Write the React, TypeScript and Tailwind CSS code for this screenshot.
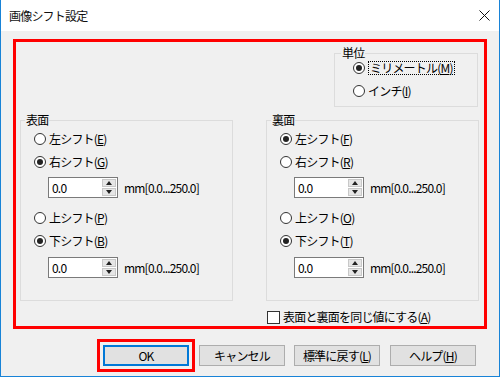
const Radio = ({ checked }: { checked?: boolean }) => (
  <span className="w-[12px] h-[12px] rounded-full border border-[#333] bg-white flex items-center justify-center shrink-0">
    {checked && <span className="w-[6px] h-[6px] rounded-full bg-[#222]" />}
  </span>
)

function RadioRow({ label, keyChar, checked }: { label: string; keyChar: string; checked?: boolean }) {
  return (
    <div className="h-[23px] flex items-center gap-[3px] pl-[13px]">
      <Radio checked={checked} />
      <span>
        {label}(<span className="underline">{keyChar}</span>)
      </span>
    </div>
  )
}

function Spin({ className = '' }: { className?: string }) {
  return (
    <div className={`flex items-center gap-[6px] pl-[27px] ${className}`}>
      <div className="w-[70px] h-[21px] border border-[#7a7a7a] bg-white flex">
        <span className="flex-1 pl-[3px] leading-[19px]">0.0</span>
        <div className="w-[16px] flex flex-col gap-[1px] p-[1px] bg-white">
          <span className="flex-1 bg-[#e6e6e6] border border-[#c8c8c8] flex items-center justify-center">
            <svg width="6" height="4" viewBox="0 0 6 4"><path d="M0 4 L3 0 L6 4 Z" fill="#222" /></svg>
          </span>
          <span className="flex-1 bg-[#e6e6e6] border border-[#c8c8c8] flex items-center justify-center">
            <svg width="6" height="4" viewBox="0 0 6 4"><path d="M0 0 L6 0 L3 4 Z" fill="#222" /></svg>
          </span>
        </div>
      </div>
      <span>mm[0.0...250.0]</span>
    </div>
  )
}

function SideGroup({ title, rows }: { title: string; rows: [string, string, boolean][] }) {
  return (
    <fieldset className="w-[213px] h-[188px] border border-[#dcdcdc]">
      <legend className="ml-[4px] px-[1px] leading-[14px]">{title}</legend>
      <RadioRow label={rows[0][0]} keyChar={rows[0][1]} checked={rows[0][2]} />
      <RadioRow label={rows[1][0]} keyChar={rows[1][1]} checked={rows[1][2]} />
      <Spin className="mt-[4px]" />
      <div className="mt-[8px]">
        <RadioRow label={rows[2][0]} keyChar={rows[2][1]} checked={rows[2][2]} />
        <RadioRow label={rows[3][0]} keyChar={rows[3][1]} checked={rows[3][2]} />
      </div>
      <Spin className="mt-[5px]" />
    </fieldset>
  )
}

function Button({ children }: { children: React.ReactNode }) {
  return (
    <button className="w-[86px] h-[21px] bg-[#e1e1e1] border border-[#adadad] text-[12px] leading-[19px] text-black">
      {children}
    </button>
  )
}

export default function App() {
  return (
    <div className="w-[500px] h-[377px] bg-[#f0f0f0] border-x border-b border-[#1883d7] flex flex-col text-[12px] tracking-[-0.8px] text-black font-['Noto_Sans_CJK_JP',sans-serif]">
      {/* Title bar */}
      <div className="h-[31px] bg-white flex items-center justify-between pl-[8px] pr-[9px] shrink-0">
        <span className="text-[12px] text-[#111]">画像シフト設定</span>
        <svg width="11" height="11" viewBox="0 0 11 11">
          <path d="M0.5 0.5 L10.5 10.5 M10.5 0.5 L0.5 10.5" stroke="#111" strokeWidth="1" />
        </svg>
      </div>

      {/* Red highlight box */}
      <div className="mt-[8px] ml-[12px] w-[474px] h-[290px] border-[3px] border-[#ff0000] flex flex-col">
        <fieldset className="self-end mr-[6px] mt-[4px] w-[144px] h-[61px] border border-[#dcdcdc]">
          <legend className="ml-[6px] px-[1px] leading-[14px]">単位</legend>
          <div className="flex flex-col gap-[7px] pl-[18px]">
            <div className="h-[16px] flex items-center gap-[3px]">
              <Radio checked />
              <span className="border border-dotted border-black leading-[12px] px-[1px]">
                ミリメートル(<span className="underline">M</span>)
              </span>
            </div>
            <div className="h-[16px] flex items-center gap-[3px]">
              <Radio />
              <span>
                インチ(<span className="underline">I</span>)
              </span>
            </div>
          </div>
        </fieldset>

        <div className="flex mt-[6px] ml-[4px] gap-[33px]">
          <SideGroup
            title="表面"
            rows={[
              ['左シフト', 'E', false],
              ['右シフト', 'G', true],
              ['上シフト', 'P', false],
              ['下シフト', 'B', true],
            ]}
          />
          <SideGroup
            title="裏面"
            rows={[
              ['左シフト', 'F', true],
              ['右シフト', 'R', false],
              ['上シフト', 'O', false],
              ['下シフト', 'T', true],
            ]}
          />
        </div>

        <div className="ml-[251px] mt-[9px] h-[14px] flex items-center gap-[3px]">
          <span className="w-[13px] h-[13px] border border-[#333] bg-white shrink-0" />
          <span>
            表面と裏面を同じ値にする(<span className="underline">A</span>)
          </span>
        </div>
      </div>

      {/* Buttons */}
      <div className="flex items-center mt-[10px] ml-[96px]">
        <div className="border-[3px] border-[#ff0000] p-[3px]">
          <button className="w-[86px] h-[21px] bg-[#e1e1e1] border-2 border-[#0078d7] text-[12px] leading-[17px] text-black">
            OK
          </button>
        </div>
        <div className="ml-[4px]">
          <Button>キャンセル</Button>
        </div>
        <div className="ml-[9px]">
          <Button>
            標準に戻す(<span className="underline">L</span>)
          </Button>
        </div>
        <div className="ml-[10px]">
          <Button>
            ヘルプ(<span className="underline">H</span>)
          </Button>
        </div>
      </div>
    </div>
  )
}
